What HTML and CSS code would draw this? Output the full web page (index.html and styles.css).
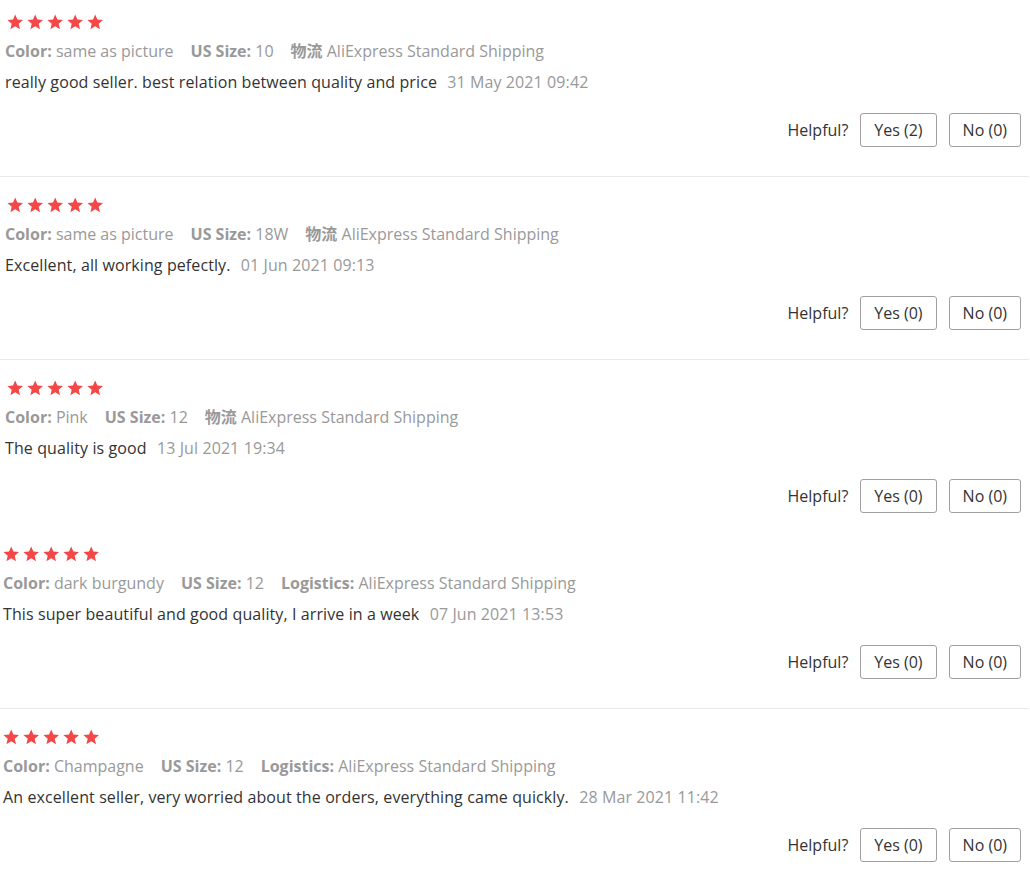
FILE: index.html
```html
<!DOCTYPE html>
<html lang="en">
<head>
<meta charset="utf-8">
<title>Reviews</title>
<link rel="stylesheet" href="styles.css">
</head>
<body>
<svg width="0" height="0" class="defs" aria-hidden="true">
  <defs>
    <symbol id="star" viewBox="0 0 16 16">
      <polygon points="8,0.4 10.2,5.5 15.8,6 11.5,9.7 12.8,15.3 8,12.3 3.2,15.3 4.5,9.7 0.2,6 5.8,5.5" />
    </symbol>
  </defs>
</svg>
<div class="reviews">

  <div class="review review--first">
    <div class="stars">
      <svg class="star"><use href="#star"/></svg><svg class="star"><use href="#star"/></svg><svg class="star"><use href="#star"/></svg><svg class="star"><use href="#star"/></svg><svg class="star"><use href="#star"/></svg>
    </div>
    <div class="meta">
      <span class="meta-item"><b>Color:</b> same as picture</span>
      <span class="meta-item"><b>US Size:</b> 10</span>
      <span class="meta-item"><b>物流</b> AliExpress Standard Shipping</span>
    </div>
    <div class="body">really good seller. best relation between quality and price <span class="date">31 May 2021 09:42</span></div>
    <div class="helpful">
      <span class="helpful-label">Helpful?</span>
      <button class="vote">Yes (2)</button>
      <button class="vote">No (0)</button>
    </div>
  </div>

  <div class="review">
    <div class="stars">
      <svg class="star"><use href="#star"/></svg><svg class="star"><use href="#star"/></svg><svg class="star"><use href="#star"/></svg><svg class="star"><use href="#star"/></svg><svg class="star"><use href="#star"/></svg>
    </div>
    <div class="meta">
      <span class="meta-item"><b>Color:</b> same as picture</span>
      <span class="meta-item"><b>US Size:</b> 18W</span>
      <span class="meta-item"><b>物流</b> AliExpress Standard Shipping</span>
    </div>
    <div class="body">Excellent, all working pefectly. <span class="date">01 Jun 2021 09:13</span></div>
    <div class="helpful">
      <span class="helpful-label">Helpful?</span>
      <button class="vote">Yes (0)</button>
      <button class="vote">No (0)</button>
    </div>
  </div>

  <div class="review review--open">
    <div class="stars">
      <svg class="star"><use href="#star"/></svg><svg class="star"><use href="#star"/></svg><svg class="star"><use href="#star"/></svg><svg class="star"><use href="#star"/></svg><svg class="star"><use href="#star"/></svg>
    </div>
    <div class="meta">
      <span class="meta-item"><b>Color:</b> Pink</span>
      <span class="meta-item"><b>US Size:</b> 12</span>
      <span class="meta-item"><b>物流</b> AliExpress Standard Shipping</span>
    </div>
    <div class="body">The quality is good <span class="date">13 Jul 2021 19:34</span></div>
    <div class="helpful">
      <span class="helpful-label">Helpful?</span>
      <button class="vote">Yes (0)</button>
      <button class="vote">No (0)</button>
    </div>
  </div>

  <div class="review review--shift review--top">
    <div class="stars">
      <svg class="star"><use href="#star"/></svg><svg class="star"><use href="#star"/></svg><svg class="star"><use href="#star"/></svg><svg class="star"><use href="#star"/></svg><svg class="star"><use href="#star"/></svg>
    </div>
    <div class="meta">
      <span class="meta-item"><b>Color:</b> dark burgundy</span>
      <span class="meta-item"><b>US Size:</b> 12</span>
      <span class="meta-item"><b>Logistics:</b> AliExpress Standard Shipping</span>
    </div>
    <div class="body">This super beautiful and good quality, I arrive in a week <span class="date">07 Jun 2021 13:53</span></div>
    <div class="helpful">
      <span class="helpful-label">Helpful?</span>
      <button class="vote">Yes (0)</button>
      <button class="vote">No (0)</button>
    </div>
  </div>

  <div class="review review--shift">
    <div class="stars">
      <svg class="star"><use href="#star"/></svg><svg class="star"><use href="#star"/></svg><svg class="star"><use href="#star"/></svg><svg class="star"><use href="#star"/></svg><svg class="star"><use href="#star"/></svg>
    </div>
    <div class="meta">
      <span class="meta-item"><b>Color:</b> Champagne</span>
      <span class="meta-item"><b>US Size:</b> 12</span>
      <span class="meta-item"><b>Logistics:</b> AliExpress Standard Shipping</span>
    </div>
    <div class="body">An excellent seller, very worried about the orders, everything came quickly. <span class="date">28 Mar 2021 11:42</span></div>
    <div class="helpful">
      <span class="helpful-label">Helpful?</span>
      <button class="vote">Yes (0)</button>
      <button class="vote">No (0)</button>
    </div>
  </div>

</div>
</body>
</html>
```

FILE: styles.css
```css
html, body {
  margin: 0;
  padding: 0;
  background: #fff;
}

body {
  font-family: "Open Sans", "Noto Sans CJK SC", sans-serif;
  font-size: 16px;
  color: #333;
}

.defs {
  position: absolute;
  width: 0;
  height: 0;
  overflow: hidden;
}

.reviews {
  width: 1029px;
}

.review {
  padding: 20px 8px 29px 5px;
  border-bottom: 1px solid #e8e8e8;
}

.review--first {
  padding-top: 14px;
}

.review--open {
  border-bottom: none;
  padding-bottom: 33px;
}

.review--top {
  padding-top: 0;
}

.review--shift {
  padding-left: 3px;
}

.stars {
  display: flex;
  gap: 3.6px;
  height: 16px;
  margin-bottom: 6px;
  padding-left: 2px;
}

.review--shift .stars {
  padding-left: 0;
}

.star {
  width: 16.4px;
  height: 16px;
  fill: #f44848;
  display: block;
}

.meta {
  display: flex;
  gap: 17px;
  line-height: 30px;
  color: #999;
  white-space: nowrap;
}

.meta b {
  font-weight: 700;
  color: #999;
}

.body {
  line-height: 32px;
  color: #333;
  letter-spacing: 0.1px;
}

.date {
  color: #999;
  margin-left: 6px;
  letter-spacing: 0.1px;
}

.helpful {
  display: flex;
  justify-content: flex-end;
  align-items: center;
  margin-top: 15px;
  gap: 12px;
}

.helpful-label {
  color: #333;
}

.vote {
  font-family: inherit;
  font-size: 16px;
  color: #333;
  background: #fff;
  border: 1px solid #a0a0a0;
  border-radius: 3px;
  height: 34px;
  padding: 0 13px;
  line-height: 32px;
  cursor: pointer;
}
```
